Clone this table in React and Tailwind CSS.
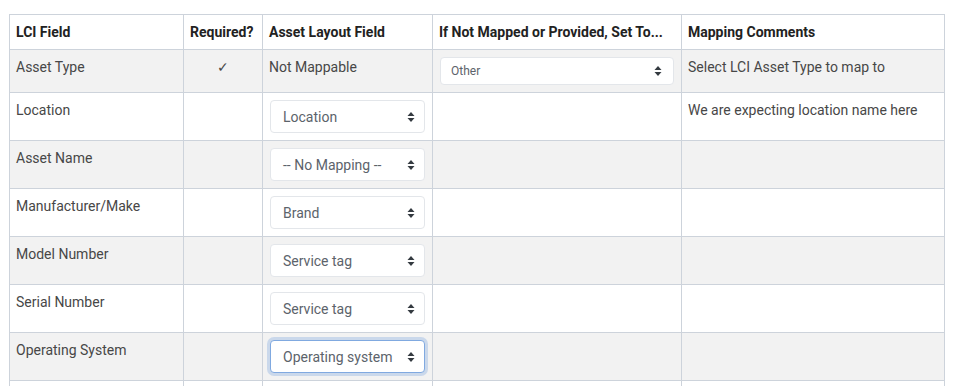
import React from 'react';

const ROWS = [
  { field: 'Asset Type', required: true, layout: null, fallback: 'Other', comment: 'Select LCI Asset Type to map to' },
  { field: 'Location', layout: 'Location', comment: 'We are expecting location name here' },
  { field: 'Asset Name', layout: '-- No Mapping --' },
  { field: 'Manufacturer/Make', layout: 'Brand' },
  { field: 'Model Number', layout: 'Service tag' },
  { field: 'Serial Number', layout: 'Service tag' },
  { field: 'Operating System', layout: 'Operating system', focused: true },
];

function Carets() {
  return (
    <svg width="8" height="12" viewBox="0 0 8 12" className="shrink-0">
      <path d="M4 1 L7.5 5 L0.5 5 Z" fill="#343a40" />
      <path d="M4 11 L7.5 7 L0.5 7 Z" fill="#343a40" />
    </svg>
  );
}

function FakeSelect({ value, small, focused }) {
  const base = small
    ? 'h-[28px] pl-[10px] pr-[11px] text-[12px]'
    : 'h-[33px] pl-[12px] pr-[9px] text-[14px]';
  const ring = focused
    ? 'border-[#80a9e0] shadow-[0_0_0_3px_rgba(128,169,224,0.35)]'
    : 'border-[#e3e6ea]';
  return (
    <div className={`${base} ${ring} w-full flex items-center justify-between rounded-[4px] border bg-white text-[#5c636b]`}>
      <span className="whitespace-nowrap">{value}</span>
      <Carets />
    </div>
  );
}

export default function App() {
  const th = 'border border-[#cdd3db] px-[6px] py-[7px] text-left align-top text-[14px] leading-[20px] font-bold text-[#222]';
  const td = 'border border-[#cdd3db] px-[6px] py-[7px] align-top text-[14px] leading-[20px] text-[#474747]';

  return (
    <div className="w-[956px] h-[386px] overflow-hidden bg-white pl-[9px] pt-[14px]" style={{ fontFamily: 'Roboto, "Liberation Sans", sans-serif' }}>
      <table className="w-[935px] table-fixed border-collapse">
        <colgroup>
          <col className="w-[174px]" />
          <col className="w-[79px]" />
          <col className="w-[170px]" />
          <col className="w-[249px]" />
          <col className="w-[263px]" />
        </colgroup>
        <thead>
          <tr>
            <th className={`${th} whitespace-nowrap`}>LCI Field</th>
            <th className={`${th} whitespace-nowrap`}>Required?</th>
            <th className={`${th} whitespace-nowrap`}>Asset Layout Field</th>
            <th className={`${th} whitespace-nowrap`}>If Not Mapped or Provided, Set To...</th>
            <th className={`${th} whitespace-nowrap`}>Mapping Comments</th>
          </tr>
        </thead>
        <tbody>
          {ROWS.map((row, i) => (
            <tr key={row.field} className={i % 2 === 0 ? 'bg-[#f2f2f2]' : 'bg-white'}>
              <td className={td}>{row.field}</td>
              <td className={`${td} text-center text-[#666]`}>{row.required ? '✓' : ''}</td>
              <td className={`${td} ${row.layout ? 'px-[7px]' : ''}`}>
                {row.layout ? <FakeSelect value={row.layout} focused={row.focused} /> : 'Not Mappable'}
              </td>
              <td className={`${td} ${row.fallback ? 'px-[7px]' : ''}`}>
                {row.fallback && <FakeSelect value={row.fallback} small />}
              </td>
              <td className={td}>{row.comment || ''}</td>
            </tr>
          ))}
          <tr className="bg-white h-[48px]">
            <td className={td}></td>
            <td className={td}></td>
            <td className={td}></td>
            <td className={td}></td>
            <td className={td}></td>
          </tr>
        </tbody>
      </table>
    </div>
  );
}
